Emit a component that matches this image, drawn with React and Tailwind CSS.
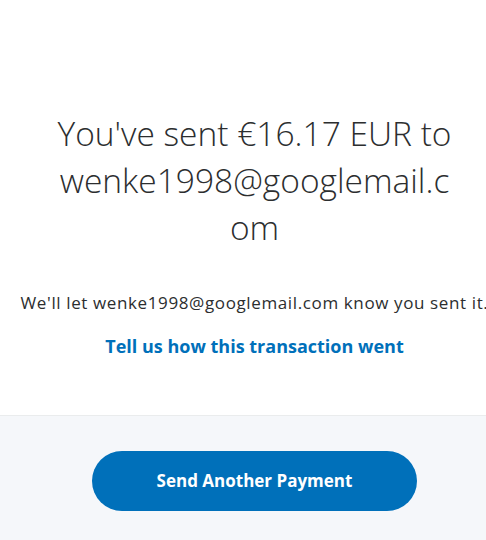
import React from 'react';

const App = () => {
    return (
        <div className="w-[486px] h-[540px] overflow-hidden bg-white" style={{ fontFamily: '"Open Sans", "Noto Sans", sans-serif' }}>
            <div className="w-[509px]">
                {/* Bestätigung */}
                <div className="h-[416px] flex flex-col items-center pt-[110px] border-b border-[#eaeced]">
                    <h1 className="w-[404px] text-center text-[33.5px] leading-[47px] font-light text-[#2c2e2f] [overflow-wrap:anywhere]">
                        You've sent €16.17 EUR to wenke1998@googlemail.com
                    </h1>
                    <p className="mt-[40px] whitespace-nowrap text-[17px] leading-6 tracking-[0.62px] text-[#2c2e2f] text-center">
                        We'll let wenke1998@googlemail.com know you sent it.
                    </p>
                    <a href="#" className="mt-[19px] text-[18px] leading-6 font-bold text-[#0070ba]">
                        Tell us how this transaction went
                    </a>
                </div>
                <div className="h-[124px] bg-[#f5f7fa] flex justify-center pt-[35px]">
                    <button className="w-[325px] h-[60px] rounded-full bg-[#0070ba] text-white text-[17px] font-bold">
                        Send Another Payment
                    </button>
                </div>
            </div>
        </div>
    );
};

export default App;
